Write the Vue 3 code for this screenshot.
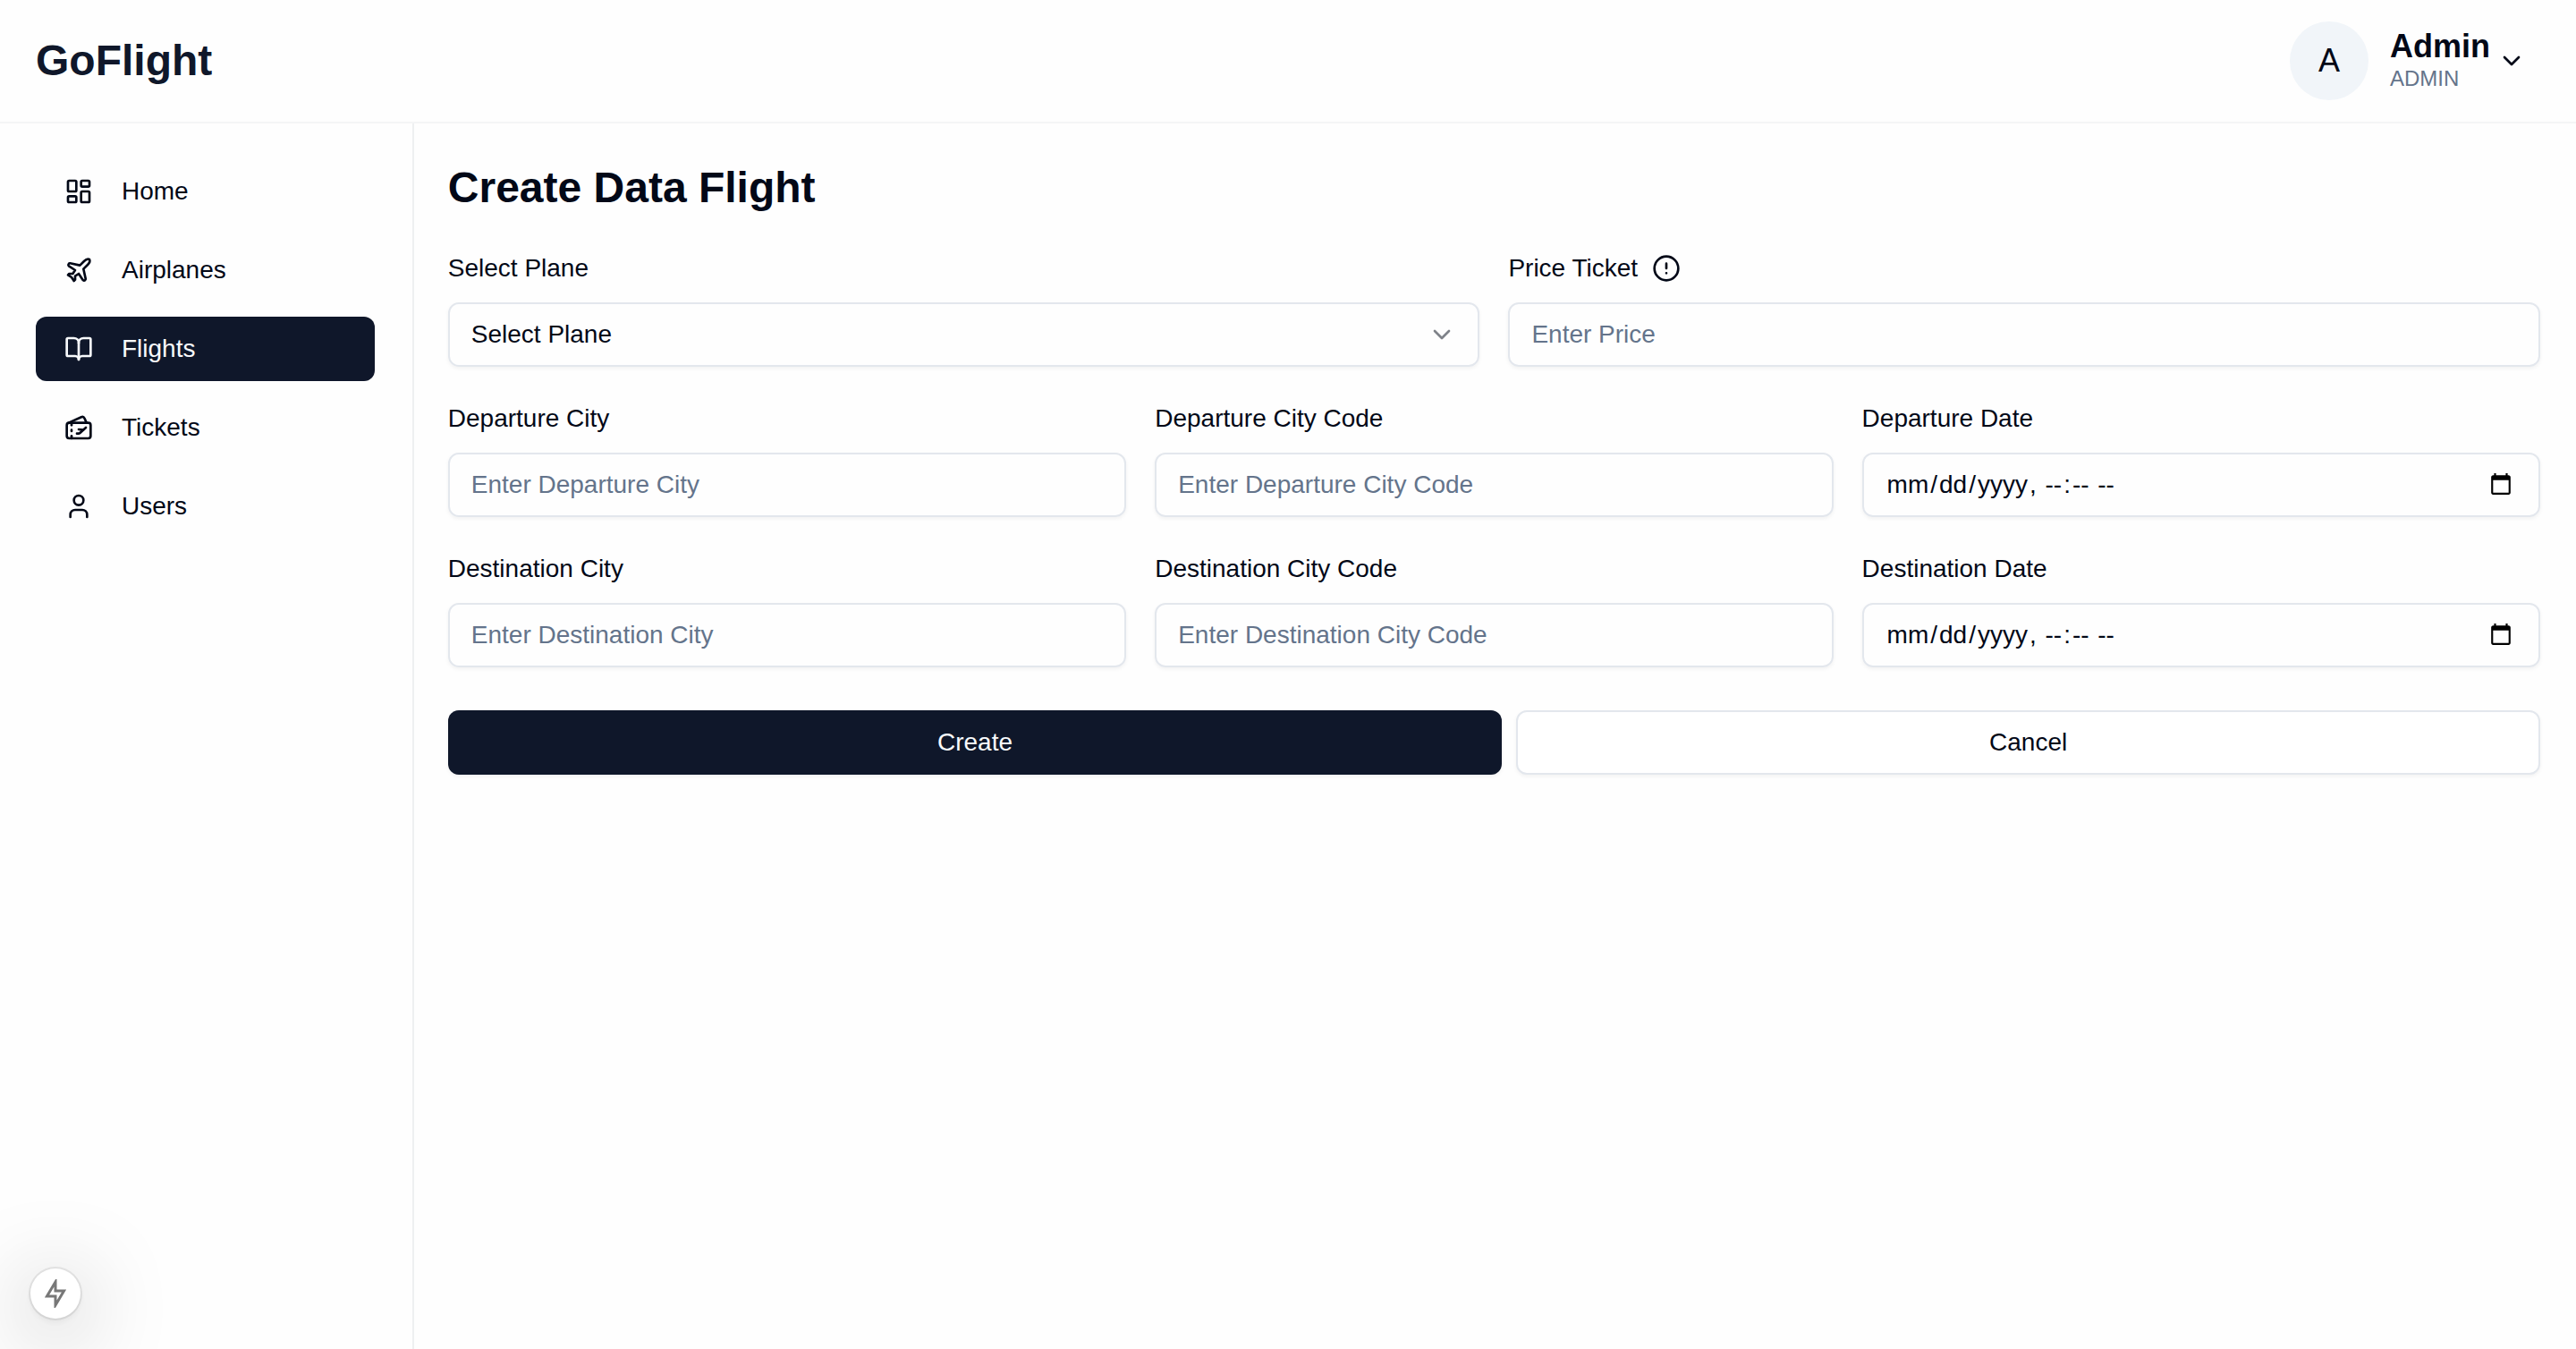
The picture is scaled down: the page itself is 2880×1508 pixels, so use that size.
<script setup>
import { ref } from 'vue'

const navItems = [
  { label: 'Home', icon: 'home' },
  { label: 'Airplanes', icon: 'plane' },
  { label: 'Flights', icon: 'book', active: true },
  { label: 'Tickets', icon: 'ticket' },
  { label: 'Users', icon: 'user' },
]

const fields = [
  { id: 'departureCity', label: 'Departure City', placeholder: 'Enter Departure City', type: 'text' },
  { id: 'departureCityCode', label: 'Departure City Code', placeholder: 'Enter Departure City Code', type: 'text' },
  { id: 'departureDate', label: 'Departure Date', type: 'datetime-local' },
  { id: 'destinationCity', label: 'Destination City', placeholder: 'Enter Destination City', type: 'text' },
  { id: 'destinationCityCode', label: 'Destination City Code', placeholder: 'Enter Destination City Code', type: 'text' },
  { id: 'destinationDate', label: 'Destination Date', type: 'datetime-local' },
]

const plane = ref('')
</script>

<template>
  <div class="app">
    <header class="topbar">
      <a href="#" class="brand">GoFlight</a>
      <button type="button" class="account">
        <span class="avatar">A</span>
        <span class="who">
          <span class="name">Admin</span>
          <span class="role">ADMIN</span>
        </span>
        <svg class="icon" viewBox="0 0 24 24"><path d="m6 9 6 6 6-6" /></svg>
      </button>
    </header>

    <div class="body">
      <nav class="sidebar">
        <a v-for="item in navItems" :key="item.label" href="#" class="nav-link" :class="{ active: item.active }">
          <svg v-if="item.icon === 'home'" class="icon" viewBox="0 0 24 24">
            <rect width="7" height="9" x="3" y="3" rx="1" />
            <rect width="7" height="5" x="14" y="3" rx="1" />
            <rect width="7" height="9" x="14" y="12" rx="1" />
            <rect width="7" height="5" x="3" y="16" rx="1" />
          </svg>
          <svg v-else-if="item.icon === 'plane'" class="icon" viewBox="0 0 24 24">
            <path d="M17.8 19.2 16 11l3.5-3.5C21 6 21.5 4 21 3c-1-.5-3 0-4.5 1.5L13 8 4.8 6.2c-.5-.1-.9.1-1.1.5l-.3.5c-.2.5-.1 1 .3 1.3L9 12l-2 3H4l-1 1 3 2 2 3 1-1v-3l3-2 3.5 5.3c.3.4.8.5 1.3.3l.5-.2c.4-.3.6-.7.5-1.2z" />
          </svg>
          <svg v-else-if="item.icon === 'book'" class="icon" viewBox="0 0 24 24">
            <path d="M12 7v14" />
            <path d="M3 18a1 1 0 0 1-1-1V4a1 1 0 0 1 1-1h5a4 4 0 0 1 4 4 4 4 0 0 1 4-4h5a1 1 0 0 1 1 1v13a1 1 0 0 1-1 1h-6a3 3 0 0 0-3 3 3 3 0 0 0-3-3z" />
          </svg>
          <svg v-else-if="item.icon === 'ticket'" class="icon" viewBox="0 0 24 24">
            <path d="M10.5 17h1.227a2 2 0 0 0 1.345-.52L18 12" />
            <path d="m12 13.5 3.75.5" />
            <path d="m3.173 8.18 11-5a2 2 0 0 1 2.647.993L18.56 8" />
            <path d="M6 10V8" />
            <path d="M6 14v1" />
            <path d="M6 19v2" />
            <rect width="20" height="13" x="2" y="8" rx="2" />
          </svg>
          <svg v-else class="icon" viewBox="0 0 24 24">
            <path d="M19 21v-2a4 4 0 0 0-4-4H9a4 4 0 0 0-4 4v2" />
            <circle cx="12" cy="7" r="4" />
          </svg>
          {{ item.label }}
        </a>
      </nav>

      <main class="content">
        <h1>Create Data Flight</h1>
        <form @submit.prevent>
          <div class="row two">
            <div class="field">
              <div class="caption"><label for="plane">Select Plane</label></div>
              <div class="select-wrap">
                <select id="plane" v-model="plane" class="control">
                  <option value="">Select Plane</option>
                </select>
                <svg class="icon caret" viewBox="0 0 24 24"><path d="m6 9 6 6 6-6" /></svg>
              </div>
            </div>
            <div class="field">
              <div class="caption with-icon">
                <label for="price">Price Ticket</label>
                <svg class="icon" viewBox="0 0 24 24">
                  <circle cx="12" cy="12" r="10" />
                  <path d="M12 8v4M12 16h.01" />
                </svg>
              </div>
              <input id="price" class="control" type="text" placeholder="Enter Price" />
            </div>
          </div>

          <div class="row three">
            <div v-for="f in fields" :key="f.id" class="field">
              <div class="caption"><label :for="f.id">{{ f.label }}</label></div>
              <input :id="f.id" class="control" :type="f.type" :placeholder="f.placeholder" />
            </div>
          </div>

          <div class="actions">
            <button type="submit" class="btn primary">Create</button>
            <button type="button" class="btn outline">Cancel</button>
          </div>
        </form>
      </main>
    </div>

    <button type="button" class="dev-badge" aria-label="Static route">
      <svg viewBox="0 0 24 32"><path d="M12 3v10h9.5L12 29V19H2.5z" /></svg>
    </button>
  </div>
</template>

<style>
body {
  background: #fefefe;
}
</style>

<style scoped>
.app,
.app * {
  box-sizing: border-box;
}
.app {
  min-height: 100vh;
  display: flex;
  flex-direction: column;
  font-family: "Liberation Sans", Arial, sans-serif;
  font-size: 28px;
  line-height: 40px;
  color: #020817;
}
button,
input,
select {
  font: inherit;
  color: inherit;
}
a {
  color: inherit;
  text-decoration: none;
}
.topbar {
  display: flex;
  align-items: center;
  justify-content: space-between;
  padding: 24px 40px;
  border-bottom: 2px solid #f4f5f6;
}
.brand {
  font-size: 48px;
  line-height: 64px;
  font-weight: 700;
  color: #0f172a;
}
.account {
  display: flex;
  align-items: center;
  padding: 0 16px 0 0;
  border: 0;
  background: none;
  text-align: left;
}
.avatar {
  display: flex;
  align-items: center;
  justify-content: center;
  width: 88px;
  height: 88px;
  margin-right: 24px;
  border-radius: 50%;
  background: #f1f5f9;
  font-size: 36px;
}
.who {
  display: flex;
  flex-direction: column;
  margin-right: 8px;
}
.name {
  font-size: 36px;
  font-weight: 700;
}
.role {
  font-size: 24px;
  line-height: 32px;
  color: #64748b;
}
.icon {
  display: block;
  flex: none;
  width: 32px;
  height: 32px;
  fill: none;
  stroke: currentColor;
  stroke-width: 2;
  stroke-linecap: round;
  stroke-linejoin: round;
}
.body {
  flex: 1;
  display: flex;
}
.sidebar {
  flex: none;
  width: 16%;
  display: flex;
  flex-direction: column;
  gap: 16px;
  padding: 40px 42px 40px 40px;
  box-shadow: 2px 0 0 #eef0f1;
}
.nav-link {
  display: flex;
  align-items: center;
  gap: 32px;
  padding: 16px 32px;
  border-radius: 12px;
}
.nav-link.active {
  background: #0f172a;
  color: #f8fafc;
}
.content {
  flex: 1;
  padding: 40px;
}
h1 {
  margin: 0 0 32px;
  font-size: 48px;
  line-height: 64px;
  font-weight: 700;
}
.row {
  display: grid;
  gap: 32px;
  margin-bottom: 32px;
}
.two {
  grid-template-columns: repeat(2, 1fr);
}
.three {
  grid-template-columns: repeat(3, 1fr);
}
.caption {
  margin-bottom: 16px;
  font-size: 32px;
  line-height: 48px;
}
.caption label {
  font-size: 28px;
  line-height: 28px;
}
.with-icon {
  display: flex;
  align-items: center;
  gap: 16px;
  height: 48px;
  padding-top: 4px;
}
.control {
  display: block;
  width: 100%;
  height: 72px;
  padding: 0 24px;
  border: 2px solid #e3e7ed;
  border-radius: 12px;
  background: transparent;
  box-shadow: 0 2px 4px rgba(0, 0, 0, 0.05);
  appearance: none;
}
.control::placeholder {
  color: #64748b;
  opacity: 1;
}
.control::-webkit-datetime-edit-month-field,
.control::-webkit-datetime-edit-day-field,
.control::-webkit-datetime-edit-year-field,
.control::-webkit-datetime-edit-hour-field,
.control::-webkit-datetime-edit-minute-field,
.control::-webkit-datetime-edit-ampm-field {
  padding: 0 2px;
}
.control::-webkit-calendar-picker-indicator {
  margin-right: 2px;
}
.select-wrap {
  position: relative;
}
.caret {
  position: absolute;
  top: 20px;
  right: 26px;
  opacity: 0.5;
  pointer-events: none;
}
.actions {
  display: grid;
  grid-template-columns: 35fr 34fr;
  gap: 16px;
  margin-top: 48px;
}
.btn {
  height: 72px;
  padding: 0 32px;
  border: 0;
  border-radius: 12px;
  box-shadow: 0 2px 4px rgba(0, 0, 0, 0.05);
}
.primary {
  background: #0f172a;
  color: #f8fafc;
}
.outline {
  border: 2px solid #e3e7ed;
  background: #fff;
}
.dev-badge {
  position: fixed;
  left: 34px;
  bottom: 34px;
  display: flex;
  align-items: center;
  justify-content: center;
  width: 56px;
  height: 56px;
  padding: 0;
  border: 0;
  border-radius: 50%;
  background: #fff;
  box-shadow: 0 0 0 2px rgba(0, 0, 0, 0.08), 0 4px 8px rgba(0, 0, 0, 0.06), 0 16px 96px rgba(0, 0, 0, 0.36);
}
.dev-badge svg {
  width: 24px;
  height: 32px;
  fill: none;
  stroke: #777;
  stroke-width: 3;
}
</style>
